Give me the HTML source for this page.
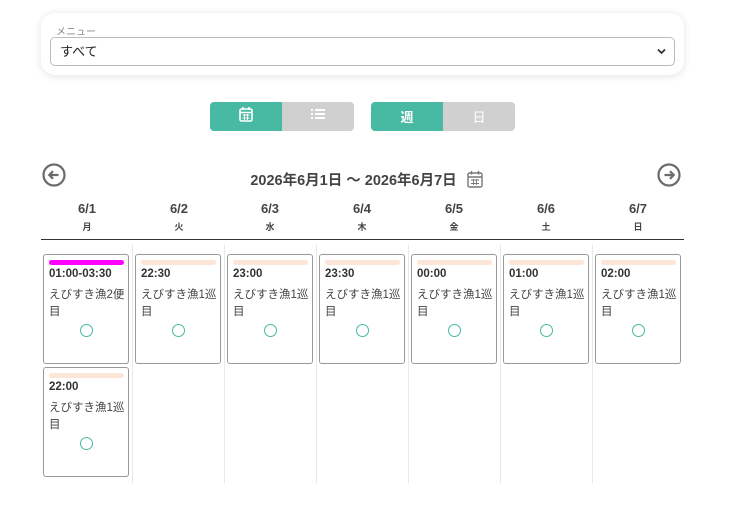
<!DOCTYPE html>
<html><head><meta charset="utf-8"><style>
*{box-sizing:border-box;margin:0;padding:0}
body{width:733px;height:527px;background:#fff;font-family:"Liberation Sans","Noto Sans CJK JP",sans-serif;color:#333;position:relative;overflow:hidden}
.a{position:absolute}
.panel{left:41px;top:13px;width:643px;height:62px;border-radius:14px;box-shadow:0 1px 8px rgba(0,0,0,.12);background:#fff}
.lbl{left:56px;top:23px;font-size:10px;color:#888}
.sel{left:50px;top:37px;width:625px;height:29px;border:1px solid #bbb;border-radius:5px;font-size:13px;padding:3px 0 0 9px;color:#222}
.btn{height:29px;top:102px;display:flex;align-items:center;justify-content:center;color:#fff;font-size:13px;font-weight:bold}
.g{background:#48b9a2}.gr{background:#d0d0d0}
.title{left:0;width:733px;top:169px;text-align:center;font-size:14.5px;font-weight:bold;color:#444}
.day{top:201px;width:92px;text-align:center;font-weight:bold;color:#444}
.day b{display:block;font-size:13px}
.day i{display:block;font-style:normal;font-size:9px;margin-top:4px}
.hr{left:41px;top:239px;width:643px;height:1px;background:#333}
.vl{top:245px;width:1px;height:238px;background:#e8e8e8}
.card{width:86px;height:110px;border:1px solid #999;border-radius:3px;background:#fff}
.bar{position:absolute;left:5px;top:5px;width:75px;height:5px;border-radius:3px;background:#fde6d8}
.t{position:absolute;left:5px;top:13px;font-size:11.5px;font-weight:bold;color:#333}
.n{position:absolute;left:5px;top:32px;width:80px;font-size:11.5px;line-height:17px;color:#444}
.c{position:absolute;left:36px;top:69px;width:13px;height:13px;border:1.5px solid #48b9a2;border-radius:50%}
</style></head><body>
<div class="a panel"></div>
<div class="a lbl">メニュー</div>
<div class="a sel">すべて<svg class="a" style="right:8px;top:10px" width="9" height="7" viewBox="0 0 9 7"><path d="M1 1.5l3.5 3.5 3.5-3.5" stroke="#333" stroke-width="1.8" fill="none"/></svg></div>

<div class="a btn g" style="left:210px;width:72px;border-radius:4px 0 0 4px"><svg width="14" height="16" viewBox="0 0 14 16" style="margin-top:-6px"><rect x="1" y="3" width="12" height="12" rx="1.5" fill="none" stroke="#fff" stroke-width="1.6"/><path d="M1 6.5h12M4 1v3M10 1v3" stroke="#fff" stroke-width="1.6"/><path d="M3.5 9h7M3.5 12h7M5.5 8v6M8.5 8v6" stroke="#fff" stroke-width="1"/></svg></div>
<div class="a btn gr" style="left:282px;width:72px;border-radius:0 4px 4px 0"><svg width="16" height="12" viewBox="0 0 16 12" style="margin-top:-6px"><path d="M1 2h2M5 2h10M1 6h2M5 6h10M1 10h2M5 10h10" stroke="#fff" stroke-width="2"/></svg></div>
<div class="a btn g" style="left:371px;width:72px;border-radius:4px 0 0 4px">週</div>
<div class="a btn gr" style="left:443px;width:72px;border-radius:0 4px 4px 0;font-weight:normal">日</div>

<svg class="a" style="left:42px;top:163px" width="24" height="24" viewBox="0 0 24 24"><circle cx="12" cy="12" r="10.5" fill="none" stroke="#6b6b6b" stroke-width="2.2"/><path d="M16.5 12h-9M11 8.2L7.3 12 11 15.8" stroke="#6b6b6b" stroke-width="2.2" fill="none"/></svg>
<svg class="a" style="left:657px;top:163px" width="24" height="24" viewBox="0 0 24 24"><circle cx="12" cy="12" r="10.5" fill="none" stroke="#6b6b6b" stroke-width="2.2"/><path d="M7.5 12h9M13 8.2L16.7 12 13 15.8" stroke="#6b6b6b" stroke-width="2.2" fill="none"/></svg>
<div class="a title">2026年6月1日 〜 2026年6月7日 <svg width="16" height="18" viewBox="0 0 16 18" style="vertical-align:-3px;margin-left:6px"><rect x="1" y="3" width="14" height="14" rx="1.5" fill="none" stroke="#777" stroke-width="1.4"/><path d="M1 7h14M4.5 1v3.5M11.5 1v3.5" stroke="#777" stroke-width="1.4"/><path d="M4 10h8M4 13.5h8M6.5 9v6M9.5 9v6" stroke="#777" stroke-width="0.9"/></svg></div>

<div class="a day" style="left:41px"><b>6/1</b><i>月</i></div>
<div class="a day" style="left:133px"><b>6/2</b><i>火</i></div>
<div class="a day" style="left:224px"><b>6/3</b><i>水</i></div>
<div class="a day" style="left:316px"><b>6/4</b><i>木</i></div>
<div class="a day" style="left:408px"><b>6/5</b><i>金</i></div>
<div class="a day" style="left:500px"><b>6/6</b><i>土</i></div>
<div class="a day" style="left:592px"><b>6/7</b><i>日</i></div>
<div class="a hr"></div>
<div class="a vl" style="left:132px"></div><div class="a vl" style="left:224px"></div><div class="a vl" style="left:316px"></div><div class="a vl" style="left:408px"></div><div class="a vl" style="left:500px"></div><div class="a vl" style="left:592px"></div>

<div class="a card" style="left:43px;top:254px"><div class="bar" style="background:#f0f"></div><div class="t">01:00-03:30</div><div class="n">えびすき漁2便目</div><div class="c"></div></div>
<div class="a card" style="left:135px;top:254px"><div class="bar"></div><div class="t">22:30</div><div class="n">えびすき漁1巡目</div><div class="c"></div></div>
<div class="a card" style="left:227px;top:254px"><div class="bar"></div><div class="t">23:00</div><div class="n">えびすき漁1巡目</div><div class="c"></div></div>
<div class="a card" style="left:319px;top:254px"><div class="bar"></div><div class="t">23:30</div><div class="n">えびすき漁1巡目</div><div class="c"></div></div>
<div class="a card" style="left:411px;top:254px"><div class="bar"></div><div class="t">00:00</div><div class="n">えびすき漁1巡目</div><div class="c"></div></div>
<div class="a card" style="left:503px;top:254px"><div class="bar"></div><div class="t">01:00</div><div class="n">えびすき漁1巡目</div><div class="c"></div></div>
<div class="a card" style="left:595px;top:254px"><div class="bar"></div><div class="t">02:00</div><div class="n">えびすき漁1巡目</div><div class="c"></div></div>
<div class="a card" style="left:43px;top:367px"><div class="bar"></div><div class="t">22:00</div><div class="n">えびすき漁1巡目</div><div class="c"></div></div>
</body></html>
